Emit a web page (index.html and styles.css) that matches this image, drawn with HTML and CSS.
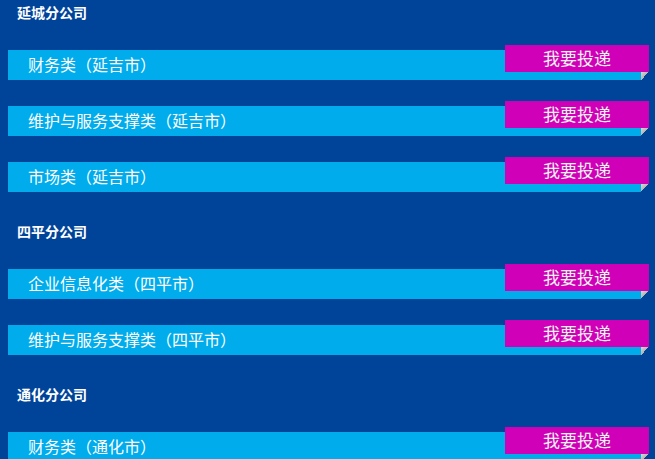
FILE: index.html
```html
<!DOCTYPE html>
<html lang="zh-CN">
<head>
<meta charset="utf-8">
<title>招聘岗位</title>
<link rel="stylesheet" href="styles.css">
</head>
<body>
<div class="page">
  <section class="branch">
    <h2 class="branch-title">延城分公司</h2>
    <ul class="jobs">
      <li class="job"><span class="job-name">财务类（延吉市）</span><a class="apply">我要投递</a><i class="fold"></i></li>
      <li class="job"><span class="job-name">维护与服务支撑类（延吉市）</span><a class="apply">我要投递</a><i class="fold"></i></li>
      <li class="job"><span class="job-name">市场类（延吉市）</span><a class="apply">我要投递</a><i class="fold"></i></li>
    </ul>
  </section>
  <section class="branch">
    <h2 class="branch-title">四平分公司</h2>
    <ul class="jobs">
      <li class="job"><span class="job-name">企业信息化类（四平市）</span><a class="apply">我要投递</a><i class="fold"></i></li>
      <li class="job"><span class="job-name">维护与服务支撑类（四平市）</span><a class="apply">我要投递</a><i class="fold"></i></li>
    </ul>
  </section>
  <section class="branch">
    <h2 class="branch-title">通化分公司</h2>
    <ul class="jobs">
      <li class="job"><span class="job-name">财务类（通化市）</span><a class="apply">我要投递</a><i class="fold"></i></li>
    </ul>
  </section>
</div>
</body>
</html>
```

FILE: styles.css
```css
html, body {
  margin: 0;
  padding: 0;
  background: #00449a;
  overflow: hidden;
}
body {
  font-family: "Noto Sans CJK SC", "Noto Sans", sans-serif;
  color: #ffffff;
}
.page {
  width: 641px;
  padding-left: 8px;
  display: flex;
  flex-direction: column;
  gap: 27px;
}
.branch-title {
  margin: 0;
  padding-left: 9px;
  height: 28px;
  line-height: 25px;
  font-size: 14px;
  font-weight: bold;
}
.jobs {
  list-style: none;
  margin: 22px 0 0 0;
  padding: 0;
  display: flex;
  flex-direction: column;
  gap: 26px;
}
.job {
  position: relative;
  box-sizing: border-box;
  height: 30px;
  background: #00acec;
  display: flex;
  align-items: center;
  padding-left: 20px;
  padding-bottom: 2px;
}
.job-name {
  font-size: 16px;
  line-height: 28px;
}
.apply {
  position: absolute;
  right: 0;
  top: -5px;
  width: 144px;
  height: 27px;
  background: #d000b8;
  color: #f4f4f4;
  font-size: 17px;
  line-height: 26px;
  text-align: center;
}
.fold {
  position: absolute;
  right: 0;
  bottom: 0;
  width: 8px;
  height: 8px;
  background: linear-gradient(135deg, #d8d8d8 0%, #b4b4b4 50%, #00449a 50%);
}
```
